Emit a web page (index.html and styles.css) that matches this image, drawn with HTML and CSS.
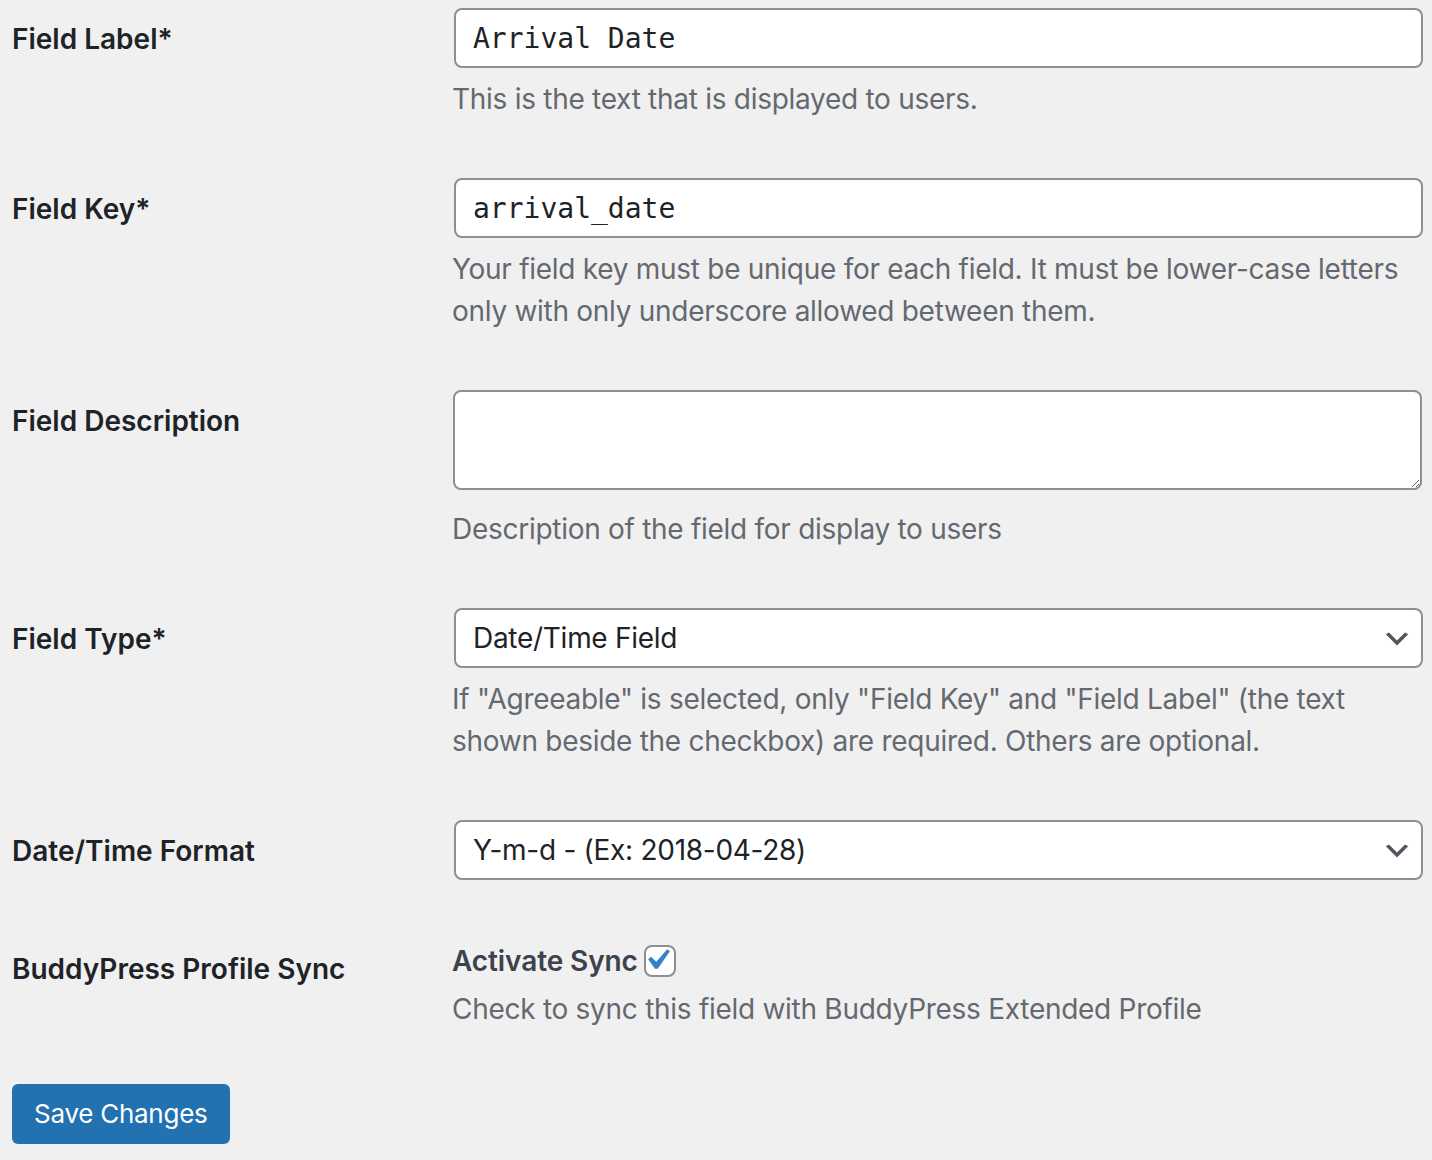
FILE: index.html
```html
<!DOCTYPE html>
<html>
<head>
<meta charset="utf-8">
<link rel="stylesheet" href="styles.css">
</head>
<body>
<form class="form">
  <div class="row">
    <div class="th">Field Label*</div>
    <div class="td">
      <input class="text" type="text" value="Arrival Date">
      <p class="desc">This is the text that is displayed to users.</p>
    </div>
  </div>
  <div class="row">
    <div class="th">Field Key*</div>
    <div class="td">
      <input class="text" type="text" value="arrival_date">
      <p class="desc">Your field key must be unique for each field. It must be lower-case letters only with only underscore allowed between them.</p>
    </div>
  </div>
  <div class="row">
    <div class="th">Field Description</div>
    <div class="td">
      <textarea class="area"></textarea>
      <p class="desc">Description of the field for display to users</p>
    </div>
  </div>
  <div class="row">
    <div class="th">Field Type*</div>
    <div class="td">
      <div class="select-wrap">
        <select class="select"><option>Date/Time Field</option></select>
        <svg class="chev" viewBox="0 0 20 20" width="32" height="32"><path d="M5 6l5 5 5-5 2 1-7 7-7-7 2-1z" fill="#50575e"/></svg>
      </div>
      <p class="desc">If "Agreeable" is selected, only "Field Key" and "Field Label" (the text shown beside the checkbox) are required. Others are optional.</p>
    </div>
  </div>
  <div class="row">
    <div class="th">Date/Time Format</div>
    <div class="td">
      <div class="select-wrap">
        <select class="select"><option>Y-m-d - (Ex: 2018-04-28)</option></select>
        <svg class="chev" viewBox="0 0 20 20" width="32" height="32"><path d="M5 6l5 5 5-5 2 1-7 7-7-7 2-1z" fill="#50575e"/></svg>
      </div>
    </div>
  </div>
  <div class="row">
    <div class="th">BuddyPress Profile Sync</div>
    <div class="td td-sync">
      <label class="check-label"><span>Activate Sync</span><span class="checkbox"><svg class="tick" viewBox="0 0 20 20" width="42" height="42"><path d="M14.83 4.89l1.34.94-5.81 8.38H9.02L5.78 9.67l1.34-1.25 2.57 2.4z" fill="#3582c4"/></svg></span></label>
      <p class="desc desc-sync">Check to sync this field with BuddyPress Extended Profile</p>
    </div>
  </div>
  <p class="submit"><button type="button" class="button">Save Changes</button></p>
</form>
</body>
</html>
```

FILE: styles.css
```css
html, body {
  margin: 0;
  padding: 0;
  background: #f0f0f1;
}
body {
  font-family: Inter, Roboto, "Liberation Sans", sans-serif;
  font-size: 28px;
  line-height: 42px;
  color: #3c434a;
}
.form {
  margin: -20px 9px 0 12px;
}
.row {
  display: grid;
  grid-template-columns: 440px 1fr;
}
.th {
  padding-top: 38px;
  font-weight: 600;
  color: #1d2327;
  line-height: 42px;
}
.td {
  padding: 28px 0 30px;
  min-width: 0;
}
.td-sync {
  padding-top: 30px;
}
.text {
  display: block;
  box-sizing: border-box;
  width: calc(100% - 2px);
  margin: 0 0 0 2px;
  height: 60px;
  border: 2px solid #8c8f94;
  border-radius: 8px;
  padding: 0 17px;
  background: #fff;
  font-family: "DejaVu Sans Mono", monospace;
  font-size: 28px;
  color: #1d2327;
  outline: none;
}
.area {
  display: block;
  box-sizing: border-box;
  width: calc(100% - 2px);
  margin: 0 0 0 1px;
  height: 100px;
  border: 2px solid #8c8f94;
  border-radius: 8px;
  background: #fff;
  padding: 4px 16px;
  font-family: "DejaVu Sans Mono", monospace;
  font-size: 28px;
  outline: none;
}
.area + .desc {
  margin-top: 18px;
}
.desc {
  margin: 10px 0 0;
  color: #646970;
  font-size: 28px;
  line-height: 42px;
  letter-spacing: -0.28px;
}
.select-wrap {
  position: relative;
  margin-left: 2px;
}
.select {
  display: block;
  box-sizing: border-box;
  width: 100%;
  height: 60px;
  -webkit-appearance: none;
  appearance: none;
  border: 2px solid #8c8f94;
  border-radius: 8px;
  background: #fff;
  padding: 0 48px 0 17px;
  font-family: Inter, Roboto, "Liberation Sans", sans-serif;
  font-size: 28px;
  letter-spacing: -0.28px;
  color: #1d2327;
  outline: none;
}
.chev {
  position: absolute;
  right: 10px;
  top: 15px;
  pointer-events: none;
}
.check-label {
  display: flex;
  align-items: center;
  gap: 6px;
  font-weight: 600;
  color: #3c434a;
  line-height: 42px;
  letter-spacing: -0.1px;
}
.checkbox {
  position: relative;
  box-sizing: border-box;
  width: 32px;
  height: 32px;
  border: 2px solid #8c8f94;
  border-radius: 8px;
  background: #fff;
}
.tick {
  position: absolute;
  left: -10px;
  top: -8px;
}
.desc-sync {
  margin-top: 6px;
}
.submit {
  margin: 0;
  padding: 24px 0 16px;
}
.button {
  height: 60px;
  padding: 0 22px;
  border: none;
  border-radius: 6px;
  background: #2271b1;
  color: #fff;
  font-family: Inter, Roboto, "Liberation Sans", sans-serif;
  font-size: 26px;
  letter-spacing: -0.26px;
  line-height: 56px;
}
```
